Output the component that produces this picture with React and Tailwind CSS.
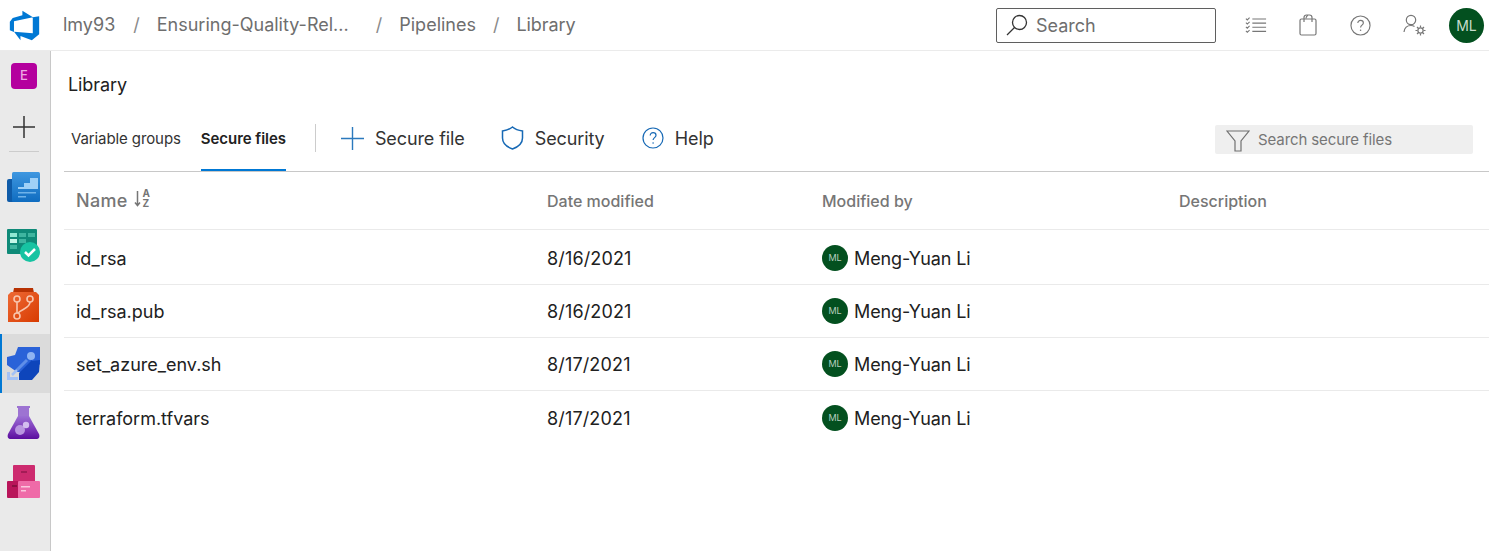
const files = [
  { name: 'id_rsa', date: '8/16/2021', h: 'h-[55px] pt-[2px]' },
  { name: 'id_rsa.pub', date: '8/16/2021', h: 'h-[53px]' },
  { name: 'set_azure_env.sh', date: '8/17/2021', h: 'h-[53px]' },
  { name: 'terraform.tfvars', date: '8/17/2021', h: 'h-[54px]' },
];

function HelpIcon({ className }) {
  return (
    <svg viewBox="0 0 22 22" className={className} fill="none" stroke="currentColor" strokeWidth="1.2">
      <circle cx="11" cy="11" r="10" />
      <path d="M8.200 8.500c0-1.700 1.300-2.900 2.900-2.900s2.900 1.100 2.900 2.700c0 2.300-2.900 2.400-2.900 4.700" />
      <circle cx="11.100" cy="16" r=".8" fill="currentColor" stroke="none" />
    </svg>
  );
}

function Logo() {
  return (
    <svg viewBox="0 0 18 18" className="h-[33px] w-[33px]">
      <path fill="#0078d4" d="M17 4v9.74l-4 3.28-6.2-2.26V17l-3.51-4.59 10.23.8V4.44zm-3.41.49L7.85 1v2.35L2.59 4.89 1 6.93v4.63l2.26 1V6.62z" />
    </svg>
  );
}

function BoardsIcon() {
  return (
    <svg viewBox="0 0 33 30" className="h-[30px] w-[33px]">
      <defs>
        <linearGradient id="ov" x1="0" y1="0" x2="0" y2="1">
          <stop offset="0" stopColor="#3f97e0" />
          <stop offset="1" stopColor="#0f6cc0" />
        </linearGradient>
      </defs>
      <rect x="0" y="7" width="20" height="23" rx="2" fill="#0f5ba8" />
      <rect x="5" y="0" width="28" height="30" rx="1.5" fill="url(#ov)" />
      <path fill="#9fd0f7" d="M11 15h6v-4h6V6h8v11H11z" />
      <rect x="11" y="20" width="18" height="1.5" fill="#6eb2ea" />
      <rect x="11" y="24" width="8" height="1.5" fill="#6eb2ea" />
    </svg>
  );
}

function TestIcon() {
  return (
    <svg viewBox="0 0 33 33" className="h-[33px] w-[33px]">
      <rect x="0" y="0" width="30" height="25" rx="1" fill="#0f8a78" />
      <rect x="3" y="4" width="7" height="4" fill="#8fe8d2" />
      <rect x="12" y="4" width="7" height="4" fill="#3fb5a0" />
      <rect x="21" y="4" width="7" height="4" fill="#3fb5a0" />
      <rect x="3" y="10" width="7" height="4" fill="#c5f5e8" />
      <rect x="12" y="10" width="7" height="4" fill="#3fb5a0" />
      <rect x="3" y="16" width="7" height="4" fill="#3fb5a0" />
      <circle cx="23" cy="23" r="10" fill="#17c3a2" />
      <path d="M18 23l3.5 3.5L28 20" fill="none" stroke="#fff" strokeWidth="2.5" />
    </svg>
  );
}

function ReposIcon() {
  return (
    <svg viewBox="0 0 31 34" className="h-[34px] w-[31px]">
      <defs>
        <linearGradient id="rp" x1="0" y1="0" x2="1" y2="1">
          <stop offset="0" stopColor="#ee6a35" />
          <stop offset="1" stopColor="#d83b01" />
        </linearGradient>
      </defs>
      <path fill="#b73203" d="M6 0h19l1 5H5z" />
      <path fill="url(#rp)" d="M3 4h25l3 3v27H0V7z" />
      <g fill="none" stroke="#f8c5ad" strokeWidth="1.6">
        <circle cx="9" cy="11" r="3" />
        <circle cx="22" cy="11" r="3" />
        <circle cx="9" cy="28" r="3" />
        <path d="M9 14v11M22 14c0 6-8 7-12 11" />
      </g>
    </svg>
  );
}

function PipelinesIcon() {
  return (
    <svg viewBox="0 0 33 33" className="h-[33px] w-[33px]">
      <path fill="#2a62d8" d="M11 0h22v17l-8 8H10L0 18v-8l8-2z" />
      <path fill="#0e45bb" d="M12 26 25 13v20H12z" />
      <path fill="#0e45bb" d="M25 14l8-1-1 12-7 8z" />
      <circle cx="24" cy="9" r="4" fill="#8fb4f2" />
      <path d="M10 23 20 13" stroke="#5f8ee8" strokeWidth="3" />
      <path d="M0 25h3v5h8v3H0z" fill="#a3c1f5" />
      <path d="M5 28l5-5" stroke="#a3c1f5" strokeWidth="2.5" />
    </svg>
  );
}

function PlansIcon() {
  return (
    <svg viewBox="0 0 33 33" className="h-[33px] w-[33px]">
      <defs>
        <linearGradient id="pl" x1="0" y1="0" x2="0" y2="1">
          <stop offset="0" stopColor="#9b6fd4" />
          <stop offset="0.6" stopColor="#7a35b8" />
          <stop offset="1" stopColor="#5a0d9e" />
        </linearGradient>
      </defs>
      <path fill="#9d73d2" d="M10 0h13v2h-1v9H11V2h-1z" />
      <path fill="url(#pl)" d="M11 10h11l10 18c1 3 0 5-3 5H4c-3 0-4-2-3-5z" />
      <circle cx="13" cy="24" r="5" fill="#b995e0" />
      <circle cx="19" cy="19" r="3.2" fill="#d3bdee" />
    </svg>
  );
}

function ArtifactsIcon() {
  return (
    <svg viewBox="0 0 33 33" className="h-[33px] w-[33px]">
      <rect x="6" y="0" width="22" height="17" rx="1" fill="#cd2b6f" />
      <rect x="14" y="6" width="6" height="2" fill="#a31c56" />
      <rect x="0" y="16" width="12" height="17" rx="1" fill="#b9155a" />
      <rect x="5" y="20" width="5" height="2" fill="#8c0f43" />
      <rect x="11" y="16" width="22" height="17" rx="1" fill="#ef6ba8" />
      <rect x="14" y="21" width="9" height="1.5" fill="#fbc6dd" />
      <rect x="14" y="25" width="5" height="1.5" fill="#fbc6dd" />
    </svg>
  );
}

function SortIcon() {
  return (
    <span className="mb-[5px] ml-[6px] flex items-center text-[#767676]">
      <svg viewBox="0 0 7 17" className="h-[17px] w-[7px]">
        <path d="M3.5 1v14M1 12.5l2.5 3 2.500-3" fill="none" stroke="currentColor" strokeWidth="1.5" />
      </svg>
      <span className="ml-[2px] flex flex-col text-[10px] font-bold leading-[10px]">
        <span>A</span>
        <span>Z</span>
      </span>
    </span>
  );
}

function Slash() {
  return <span className="text-[#8a8a8a]">/</span>;
}

function Avatar() {
  return (
    <div className="flex h-[26px] w-[26px] items-center justify-center rounded-full bg-[#03501f] text-[9px] text-[#b7cfbf]">ML</div>
  );
}

function SideItem({ active, children }) {
  return (
    <div className={`flex h-[59px] items-center justify-center ${active ? 'border-l-2 border-[#0078d4] bg-[#dbdbdb] pr-[5px]' : 'pr-[3px]'}`}>
      {children}
    </div>
  );
}

export default function App() {
  return (
    <div className="flex h-[551px] w-[1489px] flex-col overflow-hidden bg-white text-[#212121]" style={{ fontFamily: 'Inter, sans-serif' }}>
      <header className="flex h-[51px] shrink-0 items-center border-b border-[#ebebeb]">
        <div className="flex w-[51px] shrink-0 justify-center pr-[3px]">
          <Logo />
        </div>
        <nav className="ml-[12px] flex items-center pb-[2px] text-[18px] text-[#6e6e6e]">
          <span>lmy93</span>
          <span className="ml-[18px]"><Slash /></span>
          <span className="ml-[17px] w-[195px] whitespace-nowrap">Ensuring-Quality-Rel...</span>
          <span className="ml-[24px]"><Slash /></span>
          <span className="ml-[17px]">Pipelines</span>
          <span className="ml-[17px]"><Slash /></span>
          <span className="ml-[17px] tracking-[-0.1px]">Library</span>
        </nav>
        <div className="ml-auto flex items-center">
          <div className="flex h-[35px] w-[220px] items-center rounded-[2px] border border-[#5f5f5f] pl-[9px] text-[18px] text-[#6e6e6e]">
            <svg viewBox="0 0 22 22" className="h-[22px] w-[22px]" fill="none" stroke="#333333" strokeWidth="1.300">
              <circle cx="13.500" cy="8.500" r="7" />
              <path d="M8.500 13.500 1 21" />
            </svg>
            <span className="ml-[8px]">Search</span>
          </div>
          <div className="ml-[29px] text-[#777777]">
            <svg viewBox="0 0 24 18" className="h-[18px] w-[22px]" fill="none" stroke="currentColor" strokeWidth="1.2">
              <path d="M8 2.5h15M8 7h15M8 11.5h15M8 16h15" />
              <path d="M1 2l1.5 1.5L5 1M1 6.5 2.5 8 5 5.500M1 11l1.500 1.500L5 10M1 15.500 2.500 17 5 14.500" />
            </svg>
          </div>
          <div className="ml-[32px] text-[#777777]">
            <svg viewBox="0 0 18 22" className="h-[22px] w-[18px]" fill="none" stroke="currentColor" strokeWidth="1.2">
              <rect x="1" y="5" width="16" height="16" rx="1.500" />
              <path d="M5 8V3.500C5 2 6 1 7.500 1h3C12 1 13 2 13 3.500V8M9 1.500c-1.500.5-2 1.500-2 3" />
            </svg>
          </div>
          <div className="ml-[33px] text-[#777777]">
            <HelpIcon className="h-[21px] w-[21px]" />
          </div>
          <div className="ml-[32px] text-[#777777]">
            <svg viewBox="0 0 24 22" className="h-[22px] w-[24px]" fill="none" stroke="currentColor" strokeWidth="1.2">
              <circle cx="8" cy="6" r="4.700" />
              <path d="M1 18c.5-4 3-6.500 7-6.500 1.500 0 2.500.3 3.500 1" />
              <circle cx="17.500" cy="16.500" r="2.600" />
              <path d="M17.500 11.500v2M17.500 19.500v2M12.500 16.500h2M20.500 16.500h2M14 13l1.500 1.500M19.500 18.500 21 20M14 20l1.500-1.500M19.500 14.500 21 13" />
            </svg>
          </div>
          <div className="ml-[22px] mr-[5px] flex h-[35px] w-[35px] items-center justify-center rounded-full bg-[#03501f] text-[14px] text-[#c7dccd]">ML</div>
        </div>
      </header>

      <div className="flex min-h-0 flex-1">
        <aside className="flex w-[51px] shrink-0 flex-col border-r border-[#c8c8c8] bg-[#eaeaea]">
          <div className="flex h-[50px] items-center justify-center pr-[2px]">
            <div className="flex h-[26px] w-[26px] items-center justify-center rounded-[4px] bg-[#b4009e] text-[13px] font-medium text-[#eda8e2]">E</div>
          </div>
          <div className="flex h-[50px] items-center justify-center pr-[3px] pt-[2px]">
            <svg viewBox="0 0 22 22" className="h-[22px] w-[22px]">
              <path d="M11 0v22M0 11h22" stroke="#333333" strokeWidth="1.500" />
            </svg>
          </div>
          <div className="ml-[9px] mr-[11px] h-px bg-[#cccccc]" />
          <div className="mt-[5px] flex flex-col">
            <SideItem><BoardsIcon /></SideItem>
            <SideItem><TestIcon /></SideItem>
            <SideItem><ReposIcon /></SideItem>
            <SideItem active><PipelinesIcon /></SideItem>
            <SideItem><PlansIcon /></SideItem>
            <SideItem><ArtifactsIcon /></SideItem>
          </div>
        </aside>

        <main className="min-w-0 flex-1 pl-[13px]">
          <h1 className="ml-[4px] mt-[22px] text-[18px] font-normal leading-[24px] tracking-[-0.1px]">Library</h1>

          <div className="mt-[17px] flex h-[58px] items-stretch border-b border-[#c8c8c8]">
            <div className="ml-[7px] flex items-center pb-[7px] text-[15px] tracking-[-0.1px] text-[#333333]">Variable groups</div>
            <div className="ml-[20px] flex items-center border-b-2 border-[#0078d4] pb-[5px] text-[15px] font-semibold tracking-[-0.05px] text-[#212121]">Secure files</div>
            <div className="ml-[29px] mt-[10px] h-[28px] w-px bg-[#cccccc]" />
            <div className="ml-[25px] flex items-center pb-[9px] text-[18px] tracking-[-0.1px] text-[#333333]">
              <svg viewBox="0 0 23 23" className="h-[23px] w-[23px]">
                <path d="M11.500 0v23M0 11.500h23" stroke="#2b79bd" strokeWidth="1.400" />
              </svg>
              <span className="ml-[11px]">Secure file</span>
            </div>
            <div className="ml-[36px] flex items-center pb-[9px] text-[18px] tracking-[-0.1px] text-[#333333]">
              <svg viewBox="0 0 23 24" className="h-[24px] w-[23px]" fill="none" stroke="#1769b5" strokeWidth="1.500">
                <path d="M11.500 1C8 4 5 4.500 1.500 5v7c0 6 4.500 9 10 11 5.500-2 10-5 10-11V5C18 4.500 15 4 11.500 1z" />
              </svg>
              <span className="ml-[11px]">Security</span>
            </div>
            <div className="ml-[37px] flex items-center pb-[9px] text-[18px] text-[#333333]">
              <HelpIcon className="h-[22px] w-[22px] text-[#1769b5]" />
              <span className="ml-[11px]">Help</span>
            </div>
            <div className="ml-auto mr-[16px] mt-[11px] flex h-[29px] w-[258px] items-center rounded-[2px] bg-[#efefef] pl-[11px] pt-[2px] text-[15px] text-[#767676]">
              <svg viewBox="0 0 24 22" className="h-[22px] w-[24px]" fill="none" stroke="#707070" strokeWidth="1.200">
                <path d="M1 1h22l-8 10v10H9V11z" />
              </svg>
              <span className="ml-[8px] tracking-[-0.1px]">Search secure files</span>
            </div>
          </div>

          <div className="grid h-[58px] grid-cols-[471px_275px_357px_1fr] items-center border-b border-[#eaeaea] pl-[12px] font-medium text-[#767676]">
            <div className="flex items-center text-[18px] tracking-[0.3px]">Name<SortIcon /></div>
            <div className="text-[16px]">Date modified</div>
            <div className="text-[16px]">Modified by</div>
            <div className="text-[16px]">Description</div>
          </div>

          {files.map((file) => (
            <div key={file.name} className={`grid ${file.h} grid-cols-[471px_275px_357px_1fr] items-center border-b border-[#eaeaea] pl-[12px] text-[18px] last:border-b-0`}>
              <div>{file.name}</div>
              <div className="tracking-[0.15px]">{file.date}</div>
              <div className="flex items-center">
                <Avatar />
                <span className="ml-[6px] tracking-[-0.1px]">Meng-Yuan Li</span>
              </div>
              <div />
            </div>
          ))}
        </main>
      </div>
    </div>
  );
}
